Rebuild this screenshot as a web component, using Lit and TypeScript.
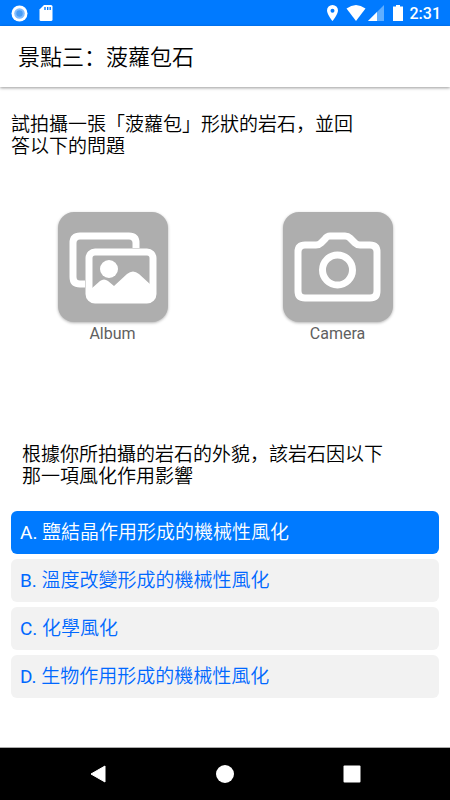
import { LitElement, html, css, svg } from "lit";
import { customElement, state } from "lit/decorators.js";
import { classMap } from "lit/directives/class-map.js";

const albumIcon = svg`
  <path d="M27 72 H22 Q15 72 15 65 V31 Q15 24 22 24 H71 Q78 24 78 31 V36" fill="none" stroke="#fff" stroke-width="7"/>
  <rect x="31" y="40" width="64" height="48" rx="6" fill="#aeaeae" stroke="#fff" stroke-width="7"/>
  <circle cx="51" cy="57" r="9" fill="#fff"/>
  <path d="M33 77 L42 69 Q46 66 50 69 L56 74 L69 62 Q75 57 81 62 L93 73 V88 H33Z" fill="#fff"/>`;

const cameraIcon = svg`
  <path d="M22 33 H33 Q36 33 38 31 L42 27 Q44 24 47 24 H62 Q65 24 67 26 L72 31 Q74 33 77 33 H87 Q94 33 94 40 V79 Q94 86 87 86 H22 Q15 86 15 79 V40 Q15 33 22 33Z"
    fill="none" stroke="#fff" stroke-width="7" stroke-linejoin="round"/>
  <circle cx="54.5" cy="58" r="15" fill="none" stroke="#fff" stroke-width="7"/>`;

@customElement("app-root")
export class AppRoot extends LitElement {
  @state() private selected = 0;

  private options = [
    { key: "A.", text: "鹽結晶作用形成的機械性風化" },
    { key: "B.", text: "溫度改變形成的機械性風化" },
    { key: "C.", text: "化學風化" },
    { key: "D.", text: "生物作用形成的機械性風化" },
  ];

  static styles = css`
    :host {
      display: flex;
      flex-direction: column;
      min-height: 100vh;
      background: #fff;
      color: #000;
      font-family: Roboto, "Noto Sans CJK SC", sans-serif;
      font-size: 19px;
      font-weight: 350;
      line-height: 22px;
    }
    * { box-sizing: border-box; }
    button {
      font: inherit;
      border: 0;
      margin: 0;
      cursor: pointer;
    }
    svg { display: block; }
    .status {
      display: flex;
      justify-content: space-between;
      align-items: center;
      height: 26px;
      padding: 0 9px 0 11px;
      background: #007aff;
      color: #fff;
    }
    .group { display: flex; align-items: center; }
    .left { gap: 11px; }
    .time { font-size: 16px; font-weight: 500; padding: 2px 0 0 7px; }
    header {
      padding: 21px 18px 18px;
      box-shadow: 0 1px 3px rgba(0, 0, 0, 0.4);
    }
    h1 {
      margin: 0;
      font-size: 22px;
      line-height: 22px;
      font-weight: inherit;
    }
    main { flex: 1; padding: 27px 11px; }
    p { margin: 0; }
    .task { max-width: 350px; }
    .media {
      display: grid;
      grid-template-columns: 1fr 1fr;
      margin: 54px -11px 99px;
    }
    .source {
      display: flex;
      flex-direction: column;
      align-items: center;
      gap: 1px;
      padding: 0;
      background: none;
      font-size: 16px;
      font-weight: 400;
      color: #606060;
    }
    .tile {
      width: 110px;
      height: 110px;
      border-radius: 16px;
      background: #aeaeae;
      box-shadow: 0 1px 3px rgba(0, 0, 0, 0.3);
    }
    .question { max-width: 364px; margin: 0 11px 23px; }
    .options { display: flex; flex-direction: column; gap: 5px; }
    .option {
      height: 43px;
      padding: 0 9px;
      border-radius: 6px;
      background: #f2f2f2;
      color: #0068ff;
      text-align: left;
    }
    .option.selected { background: #007aff; color: #fff; }
    .letter { font-weight: 400; }
    nav {
      display: flex;
      justify-content: center;
      gap: 77px;
      height: 53px;
      border-top: 1px solid #aaa;
      background: #000;
    }
    .key {
      display: flex;
      align-items: center;
      justify-content: center;
      width: 50px;
      padding: 0;
      background: none;
    }
  `;

  render() {
    return html`
      <div class="status">
        <div class="group left">
          <svg width="17" height="17" viewBox="0 0 17 17" aria-hidden="true">
            <circle cx="8.5" cy="8.5" r="8" fill="#fff"/>
            <circle cx="8.5" cy="8.5" r="5.3" fill="#80bcff"/>
            <circle cx="8.5" cy="8.5" r="3.2" fill="#489cf5"/>
          </svg>
          <svg width="14" height="16" viewBox="0 0 14 16" aria-hidden="true">
            <path d="M5 0H12Q13.5 0 13.5 1.5V14.5Q13.5 16 12 16H2Q.5 16 .5 14.5V4.5Z" fill="#fff"/>
            <path d="M6 2V5M8.7 2V5M11.2 2V5" stroke="#007aff" stroke-width="1.4"/>
          </svg>
        </div>
        <div class="group">
          <svg width="78" height="16" viewBox="0 0 78 16" aria-hidden="true">
            <path fill-rule="evenodd" d="M7.5 0A5.5 5.5 0 0 1 13 5.5C13 9.5 7.5 16 7.5 16S2 9.5 2 5.5A5.5 5.5 0 0 1 7.5 0ZM7.5 3.7A2 2 0 1 0 7.5 7.7 2 2 0 1 0 7.5 3.7Z" fill="#fff"/>
            <path d="M21.5 3.5Q31 -3.5 40.5 3.5L31 16Z" fill="#fff"/>
            <path d="M59 0V16H43Z" fill="#60aeff"/>
            <path d="M52 7V16H43Z" fill="#fff"/>
            <path d="M71 0H75V1.5H78V16H68V1.5H71Z" fill="#fff"/>
          </svg>
          <span class="time">2:31</span>
        </div>
      </div>
      <header><h1>景點三：菠蘿包石</h1></header>
      <main>
        <p class="task">試拍攝一張「菠蘿包」形狀的岩石，並回答以下的問題</p>
        <div class="media">
          <button class="source">
            <svg class="tile" viewBox="0 0 110 110" aria-hidden="true">${albumIcon}</svg>
            <span>Album</span>
          </button>
          <button class="source">
            <svg class="tile" viewBox="0 0 110 110" aria-hidden="true">${cameraIcon}</svg>
            <span>Camera</span>
          </button>
        </div>
        <p class="question">根據你所拍攝的岩石的外貌，該岩石因以下那一項風化作用影響</p>
        <div class="options">
          ${this.options.map(
            ({ key, text }, i) => html`<button
              class=${classMap({ option: true, selected: i === this.selected })}
              aria-pressed=${i === this.selected}
              @click=${() => (this.selected = i)}
            ><span class="letter">${key}</span> ${text}</button>`
          )}
        </div>
      </main>
      <nav>
        <button class="key" aria-label="Back">
          <svg width="18" height="18" viewBox="0 0 18 18"><path d="M16 1V17L2 9Z" fill="#fff" stroke="#fff" stroke-linejoin="round"/></svg>
        </button>
        <button class="key" aria-label="Home">
          <svg width="18" height="18" viewBox="0 0 18 18"><circle cx="9" cy="9" r="9" fill="#fff"/></svg>
        </button>
        <button class="key" aria-label="Recent apps">
          <svg width="18" height="18" viewBox="0 0 18 18"><rect x="0.5" y="0.5" width="17" height="17" rx="1" fill="#fff"/></svg>
        </button>
      </nav>
    `;
  }
}
